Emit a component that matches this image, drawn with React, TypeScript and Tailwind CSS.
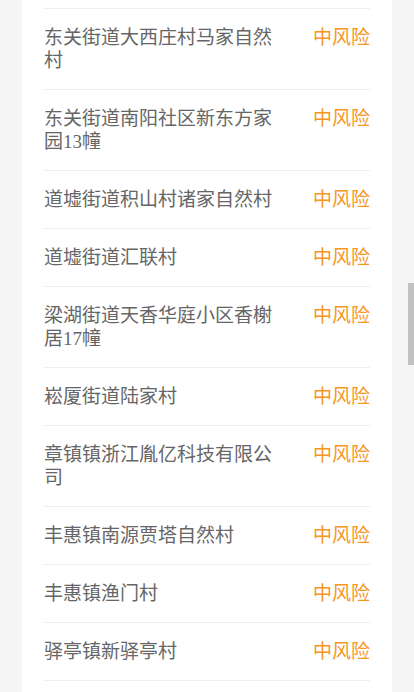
const ROWS = [
  "东关街道大西庄村马家自然村",
  "东关街道南阳社区新东方家园13幢",
  "道墟街道积山村诸家自然村",
  "道墟街道汇联村",
  "梁湖街道天香华庭小区香榭居17幢",
  "崧厦街道陆家村",
  "章镇镇浙江胤亿科技有限公司",
  "丰惠镇南源贾塔自然村",
  "丰惠镇渔门村",
  "驿亭镇新驿亭村",
];

export default function App() {
  return (
    <div
      className="relative h-[692px] overflow-hidden bg-[#f5f5f5]"
      style={{ fontFamily: '"Liberation Serif", "Noto Sans CJK SC", sans-serif' }}
    >
      <div className="mx-[22px] h-full bg-white px-[22px] pt-[8px]">
        <div className="border-b border-[#eeeeee]">
          {ROWS.map((name) => (
            <div key={name} className="flex border-t border-[#eeeeee] py-[17px] text-[19px] leading-[23px]">
              <div className="flex-1 pr-[30px] text-[#666666]">{name}</div>
              <div className="shrink-0 text-[#f7961e]">中风险</div>
            </div>
          ))}
        </div>
      </div>
      <div className="absolute right-0 top-[283px] h-[82px] w-[6px] bg-[#c1c1c1]" />
    </div>
  );
}
